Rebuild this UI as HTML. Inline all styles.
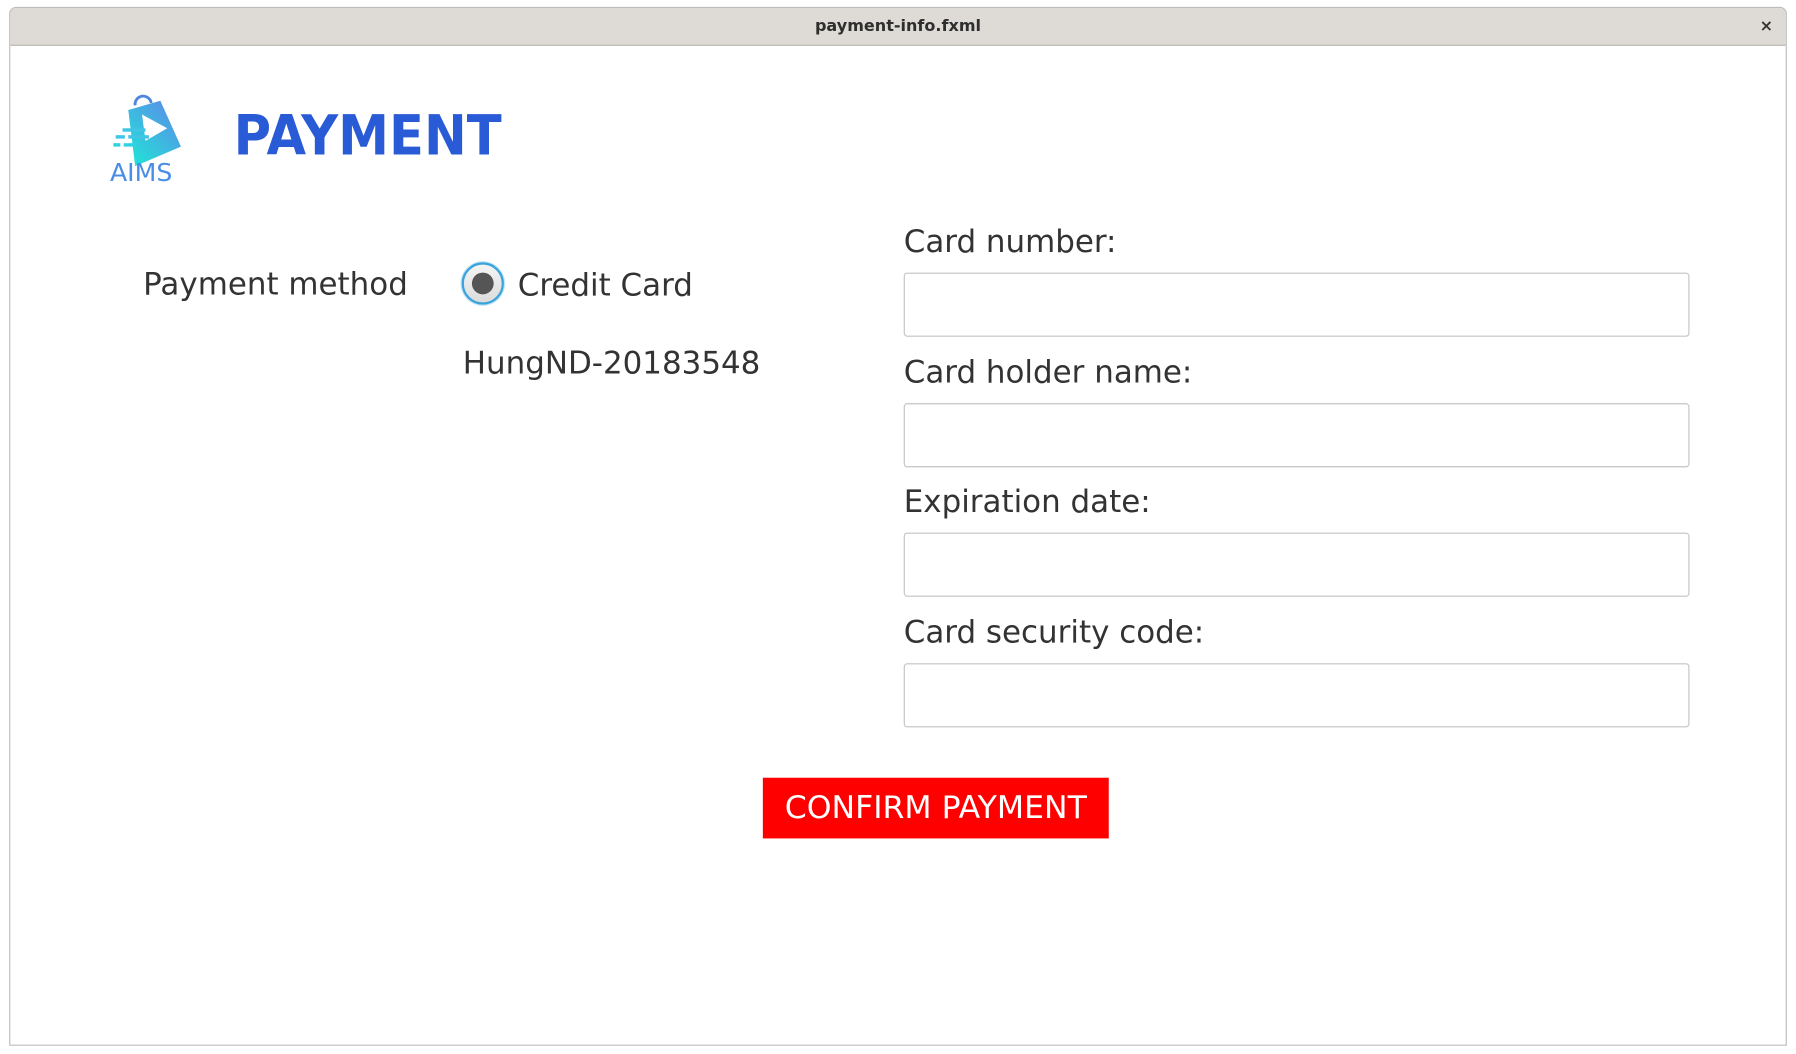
<!DOCTYPE html>
<html><head><meta charset="utf-8"><style>
html,body{margin:0;padding:0;background:#fff;width:1796px;height:1054px;overflow:hidden}
#s{position:absolute;left:0;top:0;width:1568px;height:920px;transform:scale(1.14541);transform-origin:0 0;font-family:"DejaVu Sans",sans-serif;color:#333}
.win{position:absolute;left:8px;top:6px;width:1550px;height:905px;border:1px solid #bdbdbd;border-radius:6px 6px 0 0;background:#fff;overflow:hidden}
.tb{position:absolute;left:0;top:0;right:0;height:32px;background:#dedbd7;border-bottom:1px solid #bcb8b3;text-align:center;font:bold 14px "DejaVu Sans",sans-serif;line-height:32px;color:#2e2e2e}
.x{position:absolute;right:11px;top:0;font-size:14px;font-weight:bold;color:#333}
.t{position:absolute;white-space:nowrap;font-size:27px;line-height:1}
.in{position:absolute;left:789px;width:686px;height:56px;border:1px solid #c4c4c4;border-radius:3px;background:#fff;box-sizing:border-box}
</style></head><body><div id="s">
<div class="win"><div class="tb">payment-info.fxml<span class="x">×</span></div></div>
<svg style="position:absolute;left:94px;top:80px" width="68" height="84" viewBox="0 0 68 84">
<defs><linearGradient id="g" x1="0" y1="1" x2="0.8" y2="0"><stop offset="0" stop-color="#1de9d6"/><stop offset="1" stop-color="#5a8ee8"/></linearGradient></defs>
<path d="M24 12 A7 7 0 0 1 38 10" fill="none" stroke="#4f86e0" stroke-width="2.5"/>
<path d="M18 16 L46 8 L64 48 L24 65 Z" fill="url(#g)"/>
<path d="M30 20 L52 32 L33 43 Z" fill="#fff"/>
<rect x="13" y="32" width="20" height="3" fill="#3fc6e6"/><rect x="7" y="38" width="8" height="3" fill="#3fc6e6"/><rect x="18" y="38" width="18" height="3" fill="#3fc6e6"/><rect x="5" y="45" width="6" height="3" fill="#2ed3e3"/><rect x="14" y="45" width="12" height="3" fill="#2ed3e3"/>
<text x="2" y="78" font-family="DejaVu Sans,sans-serif" font-size="22" fill="#4a8de6">AIMS</text>
</svg>
<div class="t" style="left:204px;top:91px;font:bold 48px 'DejaVu Sans',sans-serif;color:#2a5bd7;transform:scaleX(0.93);transform-origin:0 0">PAYMENT</div>
<div class="t" style="left:125px;top:235px">Payment method</div>
<div style="position:absolute;left:403px;top:229px;width:33px;height:33px;border-radius:50%;border:2px solid #3aa3dc;background:linear-gradient(#f4f4f4,#dcdcdc);box-shadow:0 0 0 1px #bfe4f5"></div>
<div style="position:absolute;left:412px;top:238px;width:19px;height:19px;border-radius:50%;background:#555"></div>
<div class="t" style="left:452px;top:236px">Credit Card</div>
<div class="t" style="left:404px;top:304px">HungND-20183548</div>
<div class="t" style="left:789px;top:198px">Card number:</div>
<div class="in" style="top:238px"></div>
<div class="t" style="left:789px;top:312px">Card holder name:</div>
<div class="in" style="top:352px"></div>
<div class="t" style="left:789px;top:425px">Expiration date:</div>
<div class="in" style="top:465px"></div>
<div class="t" style="left:789px;top:539px">Card security code:</div>
<div class="in" style="top:579px"></div>
<div style="position:absolute;left:666px;top:679px;width:302px;height:53px;background:#ff0000;color:#fff;font-size:27.5px;line-height:53px;text-align:center;white-space:nowrap">CONFIRM PAYMENT</div>
</div></body></html>
